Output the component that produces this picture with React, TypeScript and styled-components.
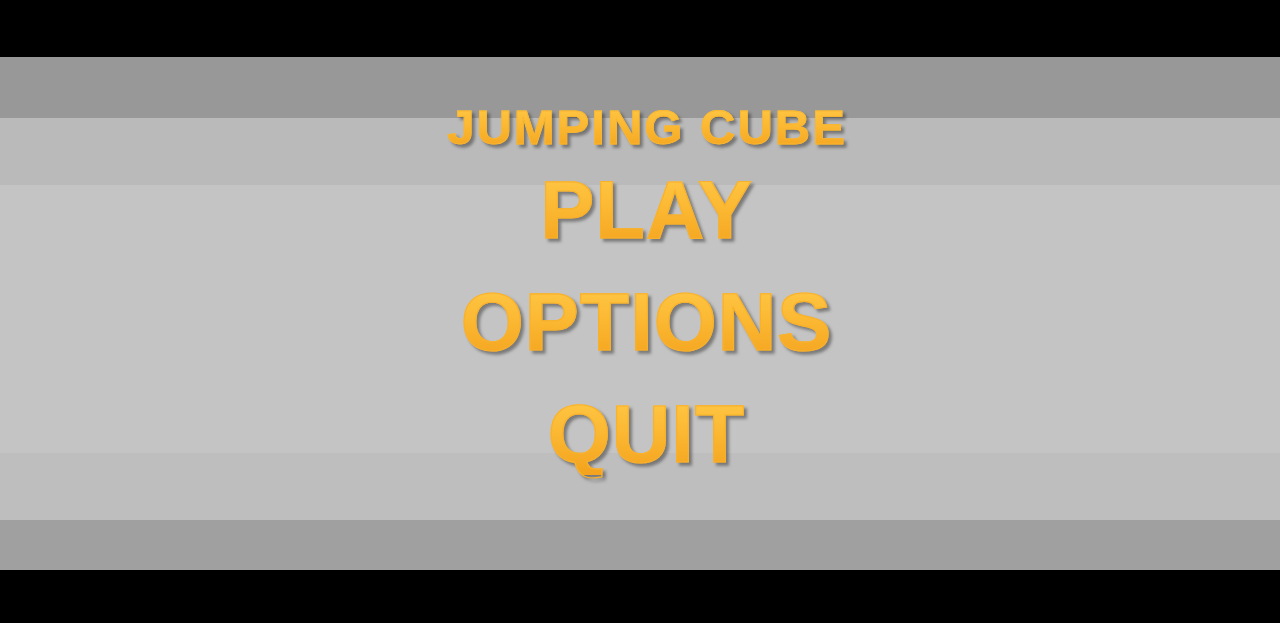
import React, { FC } from "react";
import styled, { createGlobalStyle } from "styled-components";

const GlobalStyle = createGlobalStyle`
  html, body {
    margin: 0;
    padding: 0;
    background: #000;
  }
  body {
    font-family: "Liberation Sans", Arial, sans-serif;
  }
`;

type Band = { height: number; color: string };

const bands: Band[] = [
  { height: 57, color: "#000000" },
  { height: 61, color: "#989898" },
  { height: 67, color: "#bababa" },
  { height: 268, color: "#c4c4c4" },
  { height: 67, color: "#bebebe" },
  { height: 50, color: "#a0a0a0" },
  { height: 53, color: "#000000" },
];

const menuItems = ["PLAY", "OPTIONS", "QUIT"];

const App: FC = () => {
  return (
    <Screen>
      <GlobalStyle />
      <Backdrop>
        {bands.map((b, i) => (
          <Stripe key={i} $height={b.height} $color={b.color} />
        ))}
      </Backdrop>
      <Menu>
        <Title>JUMPING CUBE</Title>
        <Items>
          {menuItems.map((label) => (
            <MenuItem key={label}>{label}</MenuItem>
          ))}
        </Items>
      </Menu>
    </Screen>
  );
};

const Screen = styled.div`
  display: grid;
  width: 1280px;
  height: 623px;
  overflow: hidden;

  & > * {
    grid-area: 1 / 1;
  }
`;

const Backdrop = styled.div`
  display: flex;
  flex-direction: column;
`;

const Stripe = styled.div<{ $height: number; $color: string }>`
  height: ${({ $height }) => $height}px;
  flex-shrink: 0;
  background: ${({ $color }) => $color};
`;

const Menu = styled.div`
  display: flex;
  flex-direction: column;
  align-items: center;
  padding-top: 103px;
  padding-left: 12px;
`;

const goldText = `
  font-weight: 700;
  line-height: 1;
  white-space: nowrap;
  background: linear-gradient(180deg, #ffc947 0%, #fbb731 50%, #f3a21d 100%);
  -webkit-background-clip: text;
  background-clip: text;
  color: transparent;
  filter: drop-shadow(3px 3px 1.5px rgba(50, 50, 50, 0.5));
`;

const Title = styled.div`
  ${goldText}
  font-size: 49px;
  letter-spacing: 2px;
  margin-right: -2px;
  -webkit-text-stroke: 0.8px #f9b630;
`;

const Items = styled.div`
  display: flex;
  flex-direction: column;
  align-items: center;
  gap: 31px;
  margin-top: 18px;
`;

const MenuItem = styled.div`
  ${goldText}
  font-size: 81px;
  letter-spacing: 1px;
  margin-right: -1px;
  -webkit-text-stroke: 1.2px #f8b12c;
  cursor: pointer;
`;

export default App;
